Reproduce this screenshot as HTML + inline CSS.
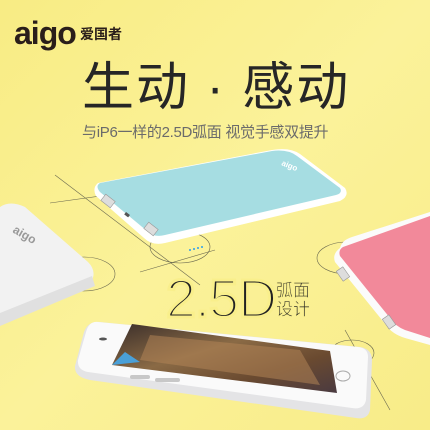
<!DOCTYPE html>
<html><head><meta charset="utf-8"><style>
html,body{margin:0;padding:0}
body{width:430px;height:430px;overflow:hidden;position:relative;background:#f9ef8c;font-family:"Liberation Sans","Noto Sans CJK SC",sans-serif}
.t{position:absolute;white-space:nowrap}
</style></head><body>
<svg width="430" height="430" style="position:absolute;left:0;top:0">
<defs>
<linearGradient id="bg" x1="0" y1="0" x2="1" y2="1"><stop offset="0" stop-color="#f8ec84"/><stop offset="0.5" stop-color="#fbf29a"/><stop offset="1" stop-color="#f8ec88"/></linearGradient>
<linearGradient id="scr" x1="0" y1="0" x2="1" y2="1"><stop offset="0" stop-color="#3a2e2a"/><stop offset="0.4" stop-color="#8a6a45"/><stop offset="0.7" stop-color="#6a4a30"/><stop offset="1" stop-color="#4a3a40"/></linearGradient>
</defs>
<rect width="430" height="430" fill="url(#bg)"/>
<g stroke="#6b6a50" stroke-width="0.6" fill="none">
<line x1="55" y1="175" x2="200" y2="285"/>
<line x1="50" y1="203" x2="180" y2="185"/>
<line x1="140" y1="272" x2="215" y2="250"/>
<ellipse cx="180" cy="247" rx="30" ry="16"/>
<ellipse cx="84" cy="274" rx="31" ry="17"/>
<ellipse cx="347" cy="258" rx="30" ry="16"/>
<ellipse cx="352" cy="353" rx="22" ry="13"/>
<line x1="345" y1="330" x2="390" y2="410"/>
</g>
<path d="M0 207 Q10 200 25 207 L88 262 Q98 272 90 284 L0 322 Z" fill="#f2f2f2"/>
<path d="M0 313 L92 276 L95 286 L0 326 Z" fill="#e0e0e0"/>
<text x="12" y="232" font-size="12" font-weight="bold" fill="#999" transform="rotate(30 12 232)">aigo</text>
<path d="M98 183 L272 150 Q290 147 300 154 L345 188 Q350 196 340 201 L165 243 Q152 246 144 238 L96 196 Q92 188 98 183 Z" fill="#fff"/>
<path d="M100 183 L272 151 Q288 149 297 156 L340 188 Q343 193 336 195 L165 235 Q154 238 147 231 L100 192 Q95 186 100 183 Z" fill="#a6dde2"/>
<text x="281" y="165" font-size="8" font-weight="bold" fill="#fff" transform="rotate(22 281 165)">aigo</text>
<rect x="102" y="197" width="12" height="8" fill="#ddd" stroke="#999" stroke-width="0.6" transform="rotate(38 108 201)"/>
<rect x="145" y="225" width="12" height="8" fill="#ddd" stroke="#999" stroke-width="0.6" transform="rotate(38 151 229)"/>
<rect x="125" y="213" width="5" height="3" fill="#555" transform="rotate(38 127 214)"/>
<g fill="#2a9ef0"><circle cx="190" cy="250" r="1"/><circle cx="194" cy="249" r="1"/><circle cx="198" cy="248" r="1"/><circle cx="202" cy="247" r="1"/></g>
<path d="M340 248 Q342 240 352 237 L430 212 L430 345 L405 338 Q392 334 386 325 L335 262 Q332 254 340 248 Z" fill="#fbfbfb"/>
<path d="M343 247 L430 216 L430 338 L405 330 Q395 326 390 318 L340 256 Q338 250 343 247 Z" fill="#f2899a"/>
<rect x="337" y="270" width="12" height="8" fill="#ddd" stroke="#999" stroke-width="0.6" transform="rotate(55 343 274)"/>
<rect x="383" y="318" width="12" height="8" fill="#ddd" stroke="#999" stroke-width="0.6" transform="rotate(55 389 322)"/>
<path d="M100 322 L360 347 Q372 349 372 360 L370 410 Q368 420 356 418 L90 380 Q74 377 75 366 L84 332 Q88 321 100 322 Z" fill="#e4e4e6"/>
<path d="M98 322 L358 347 Q368 348 368 357 L366 400 Q364 410 352 408 L88 372 Q77 370 78 360 L86 332 Q89 321 98 322 Z" fill="#fafafa"/>
<path d="M132 324 L330 351 L337 393 L112 365 Z" fill="url(#scr)"/>
<path d="M150 335 L300 350 L320 385 L140 360 Z" fill="#b08455" opacity="0.55"/>
<path d="M112 365 L125 352 L140 362 Z" fill="#4aa0d8"/>
<ellipse cx="103" cy="339" rx="4" ry="1.5" fill="#555"/>
<ellipse cx="343" cy="376" rx="7" ry="5" fill="none" stroke="#aaa" stroke-width="1"/>
<rect x="130" y="375" width="20" height="4" rx="2" fill="#c8c8c8"/>
<rect x="155" y="378" width="25" height="4" rx="2" fill="#c8c8c8"/>
</svg>
<div class="t" style="left:14px;top:15px;font-size:32px;font-weight:bold;color:#2a1e1a;letter-spacing:-1px">aigo</div>
<div class="t" style="left:80px;top:24px;font-size:14px;font-weight:bold;color:#2a1e1a">爱国者</div>
<div class="t" style="left:82px;top:58px;font-size:52px;color:#262626;letter-spacing:2px;line-height:60px">生动 · 感动</div>
<div class="t" style="left:82px;top:121px;font-size:15px;color:#6b6b6b;letter-spacing:-0.3px">与iP6一样的2.5D弧面 视觉手感双提升</div>
<div class="t" style="left:166px;top:272px;font-size:54px;color:#222;line-height:54px;letter-spacing:-1px;-webkit-text-stroke:3px #f9ef8c;paint-order:normal">2.5D</div>
<div class="t" style="left:276px;top:281px;font-size:17px;color:#222;line-height:19px;-webkit-text-stroke:0.6px #f9ef8c">弧面<br>设计</div>
</body></html>
